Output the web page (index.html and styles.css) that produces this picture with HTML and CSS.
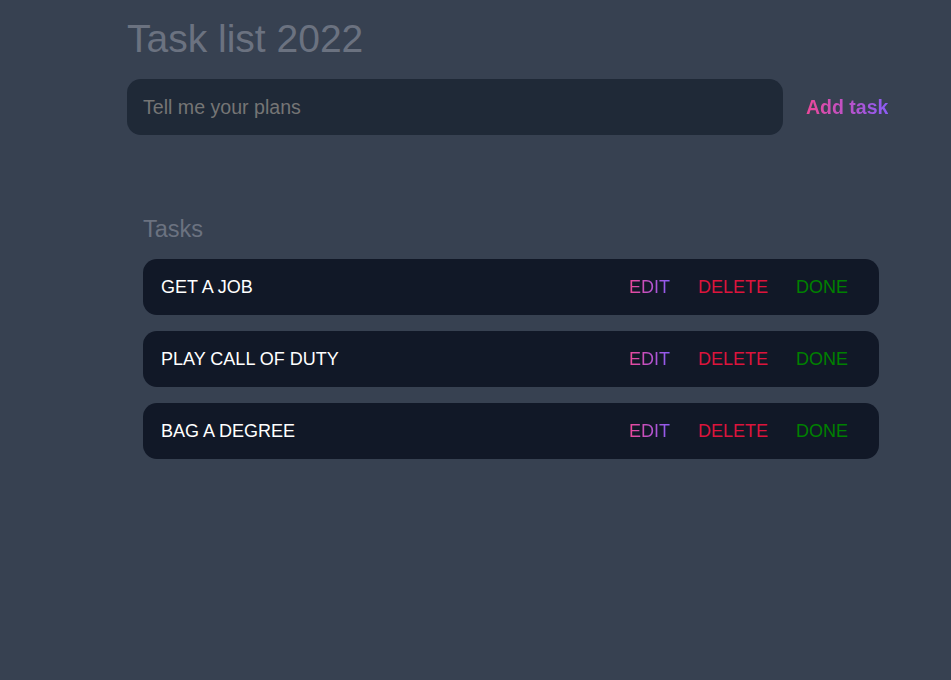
FILE: index.html
```html
<!DOCTYPE html>
<html lang="en">
<head>
<meta charset="utf-8">
<title>Task list 2022</title>
<link rel="stylesheet" href="styles.css">
</head>
<body>
<main class="app">
  <header class="header">
    <h1 class="title">Task list 2022</h1>
    <form class="new-task">
      <input class="new-task-input" type="text" placeholder="Tell me your plans">
      <button class="new-task-submit" type="button">Add task</button>
    </form>
  </header>
  <section class="task-list">
    <h2 class="task-list-title">Tasks</h2>
    <div class="tasks">
      <div class="task">
        <span class="task-text">GET A JOB</span>
        <div class="actions">
          <button class="btn edit">EDIT</button>
          <button class="btn delete">DELETE</button>
          <button class="btn done">DONE</button>
        </div>
      </div>
      <div class="task">
        <span class="task-text">PLAY CALL OF DUTY</span>
        <div class="actions">
          <button class="btn edit">EDIT</button>
          <button class="btn delete">DELETE</button>
          <button class="btn done">DONE</button>
        </div>
      </div>
      <div class="task">
        <span class="task-text">BAG A DEGREE</span>
        <div class="actions">
          <button class="btn edit">EDIT</button>
          <button class="btn delete">DELETE</button>
          <button class="btn done">DONE</button>
        </div>
      </div>
    </div>
  </section>
</main>
</body>
</html>
```

FILE: styles.css
```css
* { box-sizing: border-box; }

html, body {
  margin: 0;
  padding: 0;
}

body {
  background: #374151;
  font-family: "Liberation Sans", Arial, sans-serif;
  color: #fff;
  min-height: 680px;
}

.app {
  width: 824px;
  margin-left: 127px;
}

.header {
  padding-top: 17px;
}

.title {
  margin: 0 0 18px;
  font-size: 39px;
  font-weight: 400;
  color: #6b7280;
  line-height: 44px;
}

.new-task {
  display: flex;
  align-items: center;
}

.new-task-input {
  flex: 0 0 656px;
  width: 656px;
  height: 56px;
  border: none;
  border-radius: 14px;
  background: #1f2937;
  padding: 0 16px;
  font-family: inherit;
  font-size: 19.6px;
  color: #fff;
  outline: none;
}

.new-task-input::placeholder {
  color: #757575;
}

.new-task-submit {
  flex: 0 0 auto;
  white-space: nowrap;
  margin-left: 23px;
  padding: 0;
  border: none;
  background: linear-gradient(to right, #ec4899, #8b5cf6);
  -webkit-background-clip: text;
  background-clip: text;
  color: transparent;
  font-family: inherit;
  font-size: 19.5px;
  font-weight: 700;
  cursor: pointer;
}

.task-list {
  padding: 81px 0 0 16px;
}

.task-list-title {
  margin: 0 0 17px;
  font-size: 23.5px;
  font-weight: 400;
  color: #6b7280;
  line-height: 26px;
}

.tasks {
  width: 736px;
  display: flex;
  flex-direction: column;
  gap: 16px;
}

.task {
  display: flex;
  align-items: center;
  justify-content: space-between;
  height: 56px;
  background: #111827;
  border-radius: 14px;
  padding: 0 17px 0 18px;
}

.task-text {
  font-size: 18px;
  color: #fff;
}

.actions {
  display: flex;
}

.btn {
  border: none;
  background: none;
  padding: 0 14px;
  font-family: inherit;
  font-size: 18px;
  cursor: pointer;
}

.edit {
  background: linear-gradient(to right, #ec4899, #8b5cf6);
  -webkit-background-clip: text;
  background-clip: text;
  color: transparent;
  padding: 0;
  margin: 0 14px;
}

.delete { color: crimson; }

.done { color: green; }
```
